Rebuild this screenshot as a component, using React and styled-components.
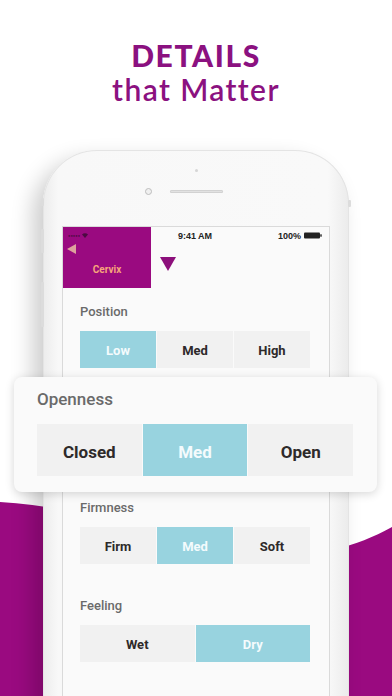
import styled, { createGlobalStyle } from "styled-components";

const PURPLE = "#9a0a80";
const INK = "#8b1180";
const BLUE = "#98d3df";

const GlobalStyle = createGlobalStyle`
  html, body {
    margin: 0;
    padding: 0;
    background: #fff;
  }
  body {
    font-family: Roboto, "Noto Sans", sans-serif;
  }
`;

// openness is drawn enlarged in the callout, so the screen keeps only its slot
const sections = [
  { label: "Position", options: ["Low", "Med", "High"], active: 0 },
  { label: "Openness", options: ["Closed", "Med", "Open"], active: 1, callout: true },
  { label: "Firmness", options: ["Firm", "Med", "Soft"], active: 1 },
  { label: "Feeling", options: ["Wet", "Dry"], active: 1 },
];

function Segments({ options, active, big }) {
  return (
    <Row $big={big}>
      {options.map((opt, i) => (
        <Segment key={opt} $active={i === active} $big={big}>
          {opt}
        </Segment>
      ))}
    </Row>
  );
}

function Battery() {
  return (
    <svg width="18" height="7" viewBox="0 0 18 7">
      <rect x="0" y="0.5" width="16" height="6" rx="1" fill="#222" />
      <rect x="16.3" y="2.3" width="1.4" height="2.4" fill="#222" />
    </svg>
  );
}

function App() {
  const openness = sections.find((s) => s.callout);

  return (
    <Page>
      <GlobalStyle />
      <Wave width="392" height="696" viewBox="0 0 392 696">
        <path d="M0 502 C150 510 260 600 392 527 L392 696 L0 696 Z" fill={PURPLE} />
      </Wave>

      <Heading>
        <strong>DETAILS</strong>
        <span>that Matter</span>
      </Heading>

      <Phone>
        <SideButton $top={48} $h={8} />
        <SideButton $top={79} $h={24} />
        <SideButton $top={132} $h={45} />
        <SideButton $top={50} $h={7} $right />

        <TopBezel>
          <Dot />
          <Sensors>
            <Camera />
            <Speaker />
          </Sensors>
        </TopBezel>

        <Screen>
          <TopArea>
            <StatusBar>
              <Carrier>
                ●●●●●
                <svg width="6" height="5" viewBox="0 0 6 5">
                  <path d="M0 1.6 A4 4 0 0 1 6 1.6 L3 5 Z" fill="#4c0a42" />
                </svg>
              </Carrier>
              <Clock>9:41 AM</Clock>
              <Power>
                100% <Battery />
              </Power>
            </StatusBar>
            <Header>
              <Tab>
                <BackArrow />
                <TabLabel>Cervix</TabLabel>
              </Tab>
              <DropArrow />
            </Header>
          </TopArea>

          {sections.map((s) =>
            s.callout ? (
              <Slot key={s.label} />
            ) : (
              <Section key={s.label}>
                <Label>{s.label}</Label>
                <Segments options={s.options} active={s.active} />
              </Section>
            )
          )}
        </Screen>
      </Phone>

      <Callout>
        <Label $big>{openness.label}</Label>
        <Segments options={openness.options} active={openness.active} big />
      </Callout>
    </Page>
  );
}

const Page = styled.main`
  position: relative;
  width: 392px;
  height: 696px;
  overflow: hidden;
  display: flex;
  flex-direction: column;
  align-items: center;
  background: #fff;
`;

const Wave = styled.svg`
  position: absolute;
  left: 0;
  top: 0;
`;

const Heading = styled.h1`
  position: relative;
  margin: 0;
  padding-top: 38px;
  text-align: center;
  color: ${INK};
  font-family: Lato, "Open Sans", sans-serif;
  font-size: 30px;
  line-height: 34px;

  strong {
    display: block;
    font-weight: 900;
    letter-spacing: 1.6px;
  }

  span {
    display: block;
    font-weight: 600;
    letter-spacing: 1.4px;
  }
`;

const Phone = styled.div`
  position: relative;
  flex: none;
  margin-top: 44px;
  width: 306px;
  height: 580px;
  box-sizing: border-box;
  padding: 0 19px;
  display: flex;
  flex-direction: column;
  border-radius: 54px 54px 0 0;
  background: linear-gradient(90deg, #ececec 0, #f8f8f8 5%, #f9f9f9 93%, #ebebeb 100%);
  box-shadow: -10px 10px 22px rgba(0, 0, 0, 0.2), inset 0 0 0 1px #e4e4e4;
`;

const SideButton = styled.span`
  position: absolute;
  top: ${(p) => p.$top}px;
  ${(p) => (p.$right ? "right: -2px;" : "left: -2px;")}
  width: 3px;
  height: ${(p) => p.$h}px;
  border-radius: 1px;
  background: #dcdcdc;
`;

const TopBezel = styled.div`
  height: 76px;
  flex: none;
  display: flex;
  flex-direction: column;
  align-items: center;
`;

const Dot = styled.span`
  margin-top: 19px;
  width: 3px;
  height: 3px;
  border-radius: 50%;
  background: #d6d6d6;
`;

const Sensors = styled.div`
  margin-top: 16px;
  width: 100%;
  display: grid;
  grid-template-columns: 1fr auto 1fr;
  align-items: center;
`;

const Camera = styled.span`
  justify-self: end;
  margin-right: 18px;
  width: 5px;
  height: 5px;
  border-radius: 50%;
  border: 1px solid #bdbdbd;
  background: #f0f0f0;
`;

const Speaker = styled.span`
  width: 53px;
  height: 3px;
  border-radius: 2px;
  background: #e2e2e2;
  box-shadow: inset 0 0 0 1px #d2d2d2;
`;

const Screen = styled.div`
  flex: 1;
  background: #fafafa;
  border: 1px solid #dadada;
  border-bottom: none;
`;

const TopArea = styled.div`
  display: grid;
`;

const StatusBar = styled.div`
  grid-area: 1 / 1;
  position: relative;
  z-index: 1;
  height: 17px;
  padding: 0 7px 0 5px;
  display: grid;
  grid-template-columns: 1fr auto 1fr;
  align-items: center;
  font-family: "Liberation Sans", Arial, sans-serif;
  font-weight: 700;
  font-size: 9px;
  color: #222;
`;

const Carrier = styled.span`
  display: flex;
  align-items: center;
  gap: 2px;
  font-size: 4px;
  color: #4c0a42;
`;

const Clock = styled.span``;

const Power = styled.span`
  justify-self: end;
  display: flex;
  align-items: center;
  gap: 3px;
`;

const Header = styled.div`
  grid-area: 1 / 1;
  display: flex;
  align-items: flex-start;
`;

const Tab = styled.div`
  width: 88px;
  height: 61px;
  box-sizing: border-box;
  padding: 17px 0 0 4px;
  background: ${PURPLE};
  display: flex;
  flex-direction: column;
`;

const BackArrow = styled.span`
  width: 0;
  height: 0;
  border-top: 5px solid transparent;
  border-bottom: 5px solid transparent;
  border-right: 9px solid #dda29d;
`;

const TabLabel = styled.span`
  margin: 10px 4px 0 0;
  text-align: center;
  font-weight: 700;
  font-size: 10px;
  color: #f7a57b;
`;

const DropArrow = styled.span`
  margin: 30px 0 0 9px;
  width: 0;
  height: 0;
  border-left: 8px solid transparent;
  border-right: 8px solid transparent;
  border-top: 14px solid #8c0f7b;
`;

const Section = styled.section`
  padding: 16px 19px 18px 17px;
`;

const Slot = styled.div`
  height: 98px;
`;

const Label = styled.div`
  font-size: ${(p) => (p.$big ? 17 : 13)}px;
  line-height: ${(p) => (p.$big ? 22 : 16)}px;
  font-weight: 500;
  color: #6a6a6a;
  margin-bottom: ${(p) => (p.$big ? 14 : 11)}px;
`;

const Row = styled.div`
  display: flex;
  gap: 1px;
  height: ${(p) => (p.$big ? 52 : 37)}px;
`;

const Segment = styled.div`
  flex: 1;
  display: flex;
  align-items: center;
  justify-content: center;
  padding-top: ${(p) => (p.$big ? 4 : 2)}px;
  font-weight: 700;
  font-size: ${(p) => (p.$big ? 17 : 13)}px;
  background: ${(p) => (p.$active ? BLUE : "#f1f1f1")};
  color: ${(p) => (p.$active ? "#f4fbfd" : "#2e2a2a")};
`;

const Callout = styled.div`
  position: absolute;
  left: 14px;
  top: 377px;
  width: 363px;
  box-sizing: border-box;
  padding: 11px 24px 16px 23px;
  border-radius: 8px;
  background: #fafafa;
  box-shadow: 0 2px 10px rgba(0, 0, 0, 0.16);
`;

export default App;
